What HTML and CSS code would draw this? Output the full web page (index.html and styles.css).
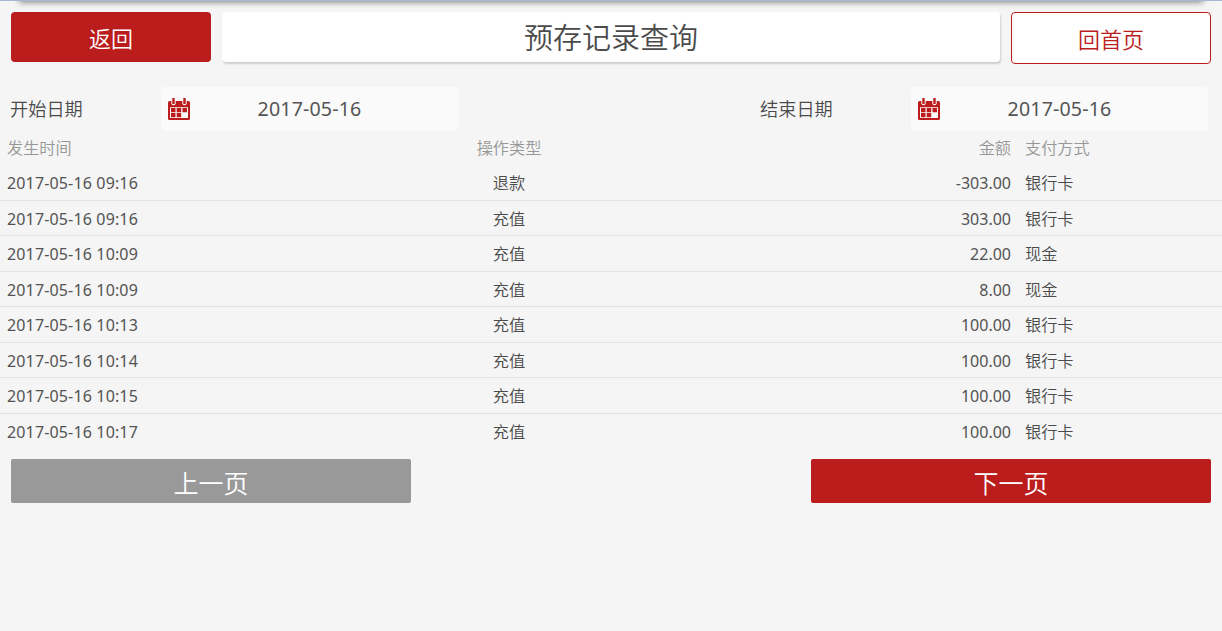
FILE: index.html
```html
<!DOCTYPE html>
<html lang="zh-CN">
<head>
<meta charset="utf-8">
<title>预存记录查询</title>
<link rel="stylesheet" href="styles.css">
</head>
<body>
<svg class="sprite" width="0" height="0">
  <symbol id="calendar" viewBox="0 0 22 22">
    <path fill="#bb1d1d" d="M1.500 3H20.500Q22 3 22 4.500V20.500Q22 22 20.500 22H1.500Q0 22 0 20.500V4.500Q0 3 1.500 3Z"/>
    <path fill="#fafafa" d="M2 9.300H20V20H2ZM3.300 0H7.700V6Q5.500 8.500 3.300 6ZM14.300 0H18.700V6Q16.500 8.500 14.300 6Z"/>
    <path fill="#bb1d1d" d="M4.300 0H6.700V6H4.300ZM15.300 0H17.700V6H15.300ZM3 10H7.500V14.300H3ZM8.700 10H13.200V14.300H8.700ZM14.500 10H19V14.300H14.500ZM3 15H7.500V19.300H3ZM8.700 15H13.200V19.300H8.700Z"/>
  </symbol>
</svg>
<div class="topline"></div>
<header class="header">
  <div class="btn btn-back">返回</div>
  <h1 class="title">预存记录查询</h1>
  <div class="btn btn-home">回首页</div>
</header>
<section class="filters">
  <div class="filter"><label class="filter-label">开始日期</label><div class="date"><svg class="icon"><use href="#calendar"/></svg><span class="date-value">2017-05-16</span></div></div>
  <div class="filter"><label class="filter-label">结束日期</label><div class="date"><svg class="icon"><use href="#calendar"/></svg><span class="date-value">2017-05-16</span></div></div>
</section>
<main class="records">
  <div class="row head"><span>发生时间</span><span class="type">操作类型</span><span class="amount">金额</span><span class="pay">支付方式</span></div>
  <div class="row"><span class="time">2017-05-16 09:16</span><span class="type">退款</span><span class="amount">-303.00</span><span class="pay">银行卡</span></div>
  <div class="row"><span class="time">2017-05-16 09:16</span><span class="type">充值</span><span class="amount">303.00</span><span class="pay">银行卡</span></div>
  <div class="row"><span class="time">2017-05-16 10:09</span><span class="type">充值</span><span class="amount">22.00</span><span class="pay">现金</span></div>
  <div class="row"><span class="time">2017-05-16 10:09</span><span class="type">充值</span><span class="amount">8.00</span><span class="pay">现金</span></div>
  <div class="row"><span class="time">2017-05-16 10:13</span><span class="type">充值</span><span class="amount">100.00</span><span class="pay">银行卡</span></div>
  <div class="row"><span class="time">2017-05-16 10:14</span><span class="type">充值</span><span class="amount">100.00</span><span class="pay">银行卡</span></div>
  <div class="row"><span class="time">2017-05-16 10:15</span><span class="type">充值</span><span class="amount">100.00</span><span class="pay">银行卡</span></div>
  <div class="row"><span class="time">2017-05-16 10:17</span><span class="type">充值</span><span class="amount">100.00</span><span class="pay">银行卡</span></div>
</main>
<footer class="pager">
  <div class="page-btn prev">上一页</div>
  <div class="page-btn next">下一页</div>
</footer>
</body>
</html>
```
FILE: styles.css
```css
* { box-sizing: border-box; }
body {
  margin: 0;
  height: 631px;
  overflow: hidden;
  background: #f5f5f5;
  color: #4b4b4b;
  font-family: "Noto Sans", "Noto Sans CJK SC", sans-serif;
  font-weight: 350;
}
.sprite { display: block; }
.topline {
  height: 1px;
  background: #a5b7d6;
  position: relative;
}
.topline::after {
  content: "";
  position: absolute;
  left: 20px;
  right: 20px;
  top: -9px;
  height: 9px;
  box-shadow: 0 1px 6px 1px rgba(0, 0, 0, .5);
  clip-path: inset(10px -12px -12px -12px);
}
.header {
  display: flex;
  align-items: flex-start;
  padding: 11px 11px 0;
  height: 86px;
}
.btn {
  width: 200px;
  height: 50px;
  line-height: 53px;
  border-radius: 4px;
  text-align: center;
  font-size: 22px;
}
.btn-back { background: #bb1d1d; color: #fff; }
.btn-home {
  height: 52px;
  border: 1px solid #bb1d1d;
  background: #fff;
  color: #bb1d1d;
}
.title {
  flex: 1;
  height: 50px;
  margin: 0 11px;
  line-height: 51px;
  border-radius: 4px;
  background: #fff;
  box-shadow: 1px 2px 2px rgba(0, 0, 0, .16);
  text-align: center;
  font-size: 29px;
  font-weight: 350;
}
.filters { display: flex; padding-left: 10px; height: 44px; }
.filter { display: flex; width: 750px; flex: none; }
.filter:last-child { width: 448px; }
.filter-label { width: 151px; line-height: 44px; font-size: 18.2px; }
.date {
  display: flex;
  align-items: center;
  width: 297px;
  height: 44px;
  padding-left: 7px;
  border-radius: 4px;
  background: #fafafa;
}
.icon { width: 22px; height: 22px; flex: none; }
.date-value {
  width: 239px;
  text-align: center;
  font-size: 19.6px;
  letter-spacing: .15px;
  line-height: 44px;
  height: 44px;
  font-weight: 400;
  color: #555;
}
.records { height: 318px; }
.row {
  display: grid;
  grid-template-columns: 407px 204px 400px 211px;
  height: 35.57px;
  line-height: 36px;
  border-bottom: 1px solid #e2e2e2;
  font-size: 16.2px;
}
.row > span { padding-left: 7px; white-space: nowrap; }
.row .time, .row:not(.head) .amount { font-weight: 400; font-size: 16px; color: #535353; }
.row .time { letter-spacing: .15px; }
.row .type { padding-left: 0; text-align: center; }
.row .amount { padding-left: 0; text-align: right; }
.row .pay { padding-left: 14px; }
.head { height: 34px; line-height: 35px; color: #979797; border-bottom: 0; }
.row:last-child { border-bottom: 0; }
.pager {
  display: flex;
  justify-content: space-between;
  padding: 10px 11px 0;
}
.page-btn {
  width: 400px;
  height: 44px;
  line-height: 49px;
  border-radius: 2px;
  color: #fff;
  text-align: center;
  font-size: 25px;
}
.prev { background: #999; }
.next { background: #bb1d1d; }
```
